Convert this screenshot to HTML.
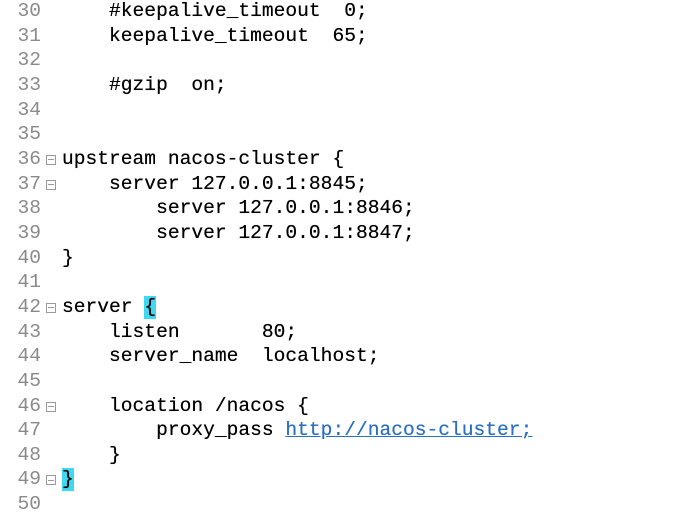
<!DOCTYPE html>
<html><head><meta charset="utf-8"><style>
html,body{margin:0;padding:0;background:#fff;width:692px;height:500px;overflow:hidden}
.w{position:absolute;top:-1px;left:0;font-family:"Liberation Mono",monospace;font-size:19.6px;line-height:24.67px}
.r{height:24.67px;position:relative}
.n{position:absolute;left:0;width:41px;text-align:right;color:#8a8a8a}
.f{position:absolute;left:46px;top:8px;width:8px;height:8px;border:1px solid #9a9a9a;}
.f:after{content:"";position:absolute;left:1px;right:1px;top:3.5px;height:1px;background:#9a9a9a}
.t{position:absolute;left:62px;color:#000;white-space:pre;text-shadow:0 0 0.4px #000}
.h{background:#3fd8f0;display:inline-block;height:23px;line-height:23px}
a{color:#2a6fc0;text-decoration:underline;text-shadow:0 0 0.4px #2a6fc0}
</style></head><body><div class="w">
<div class="r"><span class="n">30</span><span class="t">    #keepalive_timeout  0;</span></div>
<div class="r"><span class="n">31</span><span class="t">    keepalive_timeout  65;</span></div>
<div class="r"><span class="n">32</span></div>
<div class="r"><span class="n">33</span><span class="t">    #gzip  on;</span></div>
<div class="r"><span class="n">34</span></div>
<div class="r"><span class="n">35</span></div>
<div class="r"><span class="n">36</span><span class="f"></span><span class="t">upstream nacos-cluster {</span></div>
<div class="r"><span class="n">37</span><span class="f"></span><span class="t">    server 127.0.0.1:8845;</span></div>
<div class="r"><span class="n">38</span><span class="t">        server 127.0.0.1:8846;</span></div>
<div class="r"><span class="n">39</span><span class="t">        server 127.0.0.1:8847;</span></div>
<div class="r"><span class="n">40</span><span class="t">}</span></div>
<div class="r"><span class="n">41</span></div>
<div class="r"><span class="n">42</span><span class="f"></span><span class="t">server <span class="h">{</span></span></div>
<div class="r"><span class="n">43</span><span class="t">    listen       80;</span></div>
<div class="r"><span class="n">44</span><span class="t">    server_name  localhost;</span></div>
<div class="r"><span class="n">45</span></div>
<div class="r"><span class="n">46</span><span class="f"></span><span class="t">    location /nacos {</span></div>
<div class="r"><span class="n">47</span><span class="t">        proxy_pass <a>http://nacos-cluster;</a></span></div>
<div class="r"><span class="n">48</span><span class="t">    }</span></div>
<div class="r"><span class="n">49</span><span class="f"></span><span class="t"><span class="h">}</span></span></div>
<div class="r"><span class="n">50</span></div>
</div></body></html>
